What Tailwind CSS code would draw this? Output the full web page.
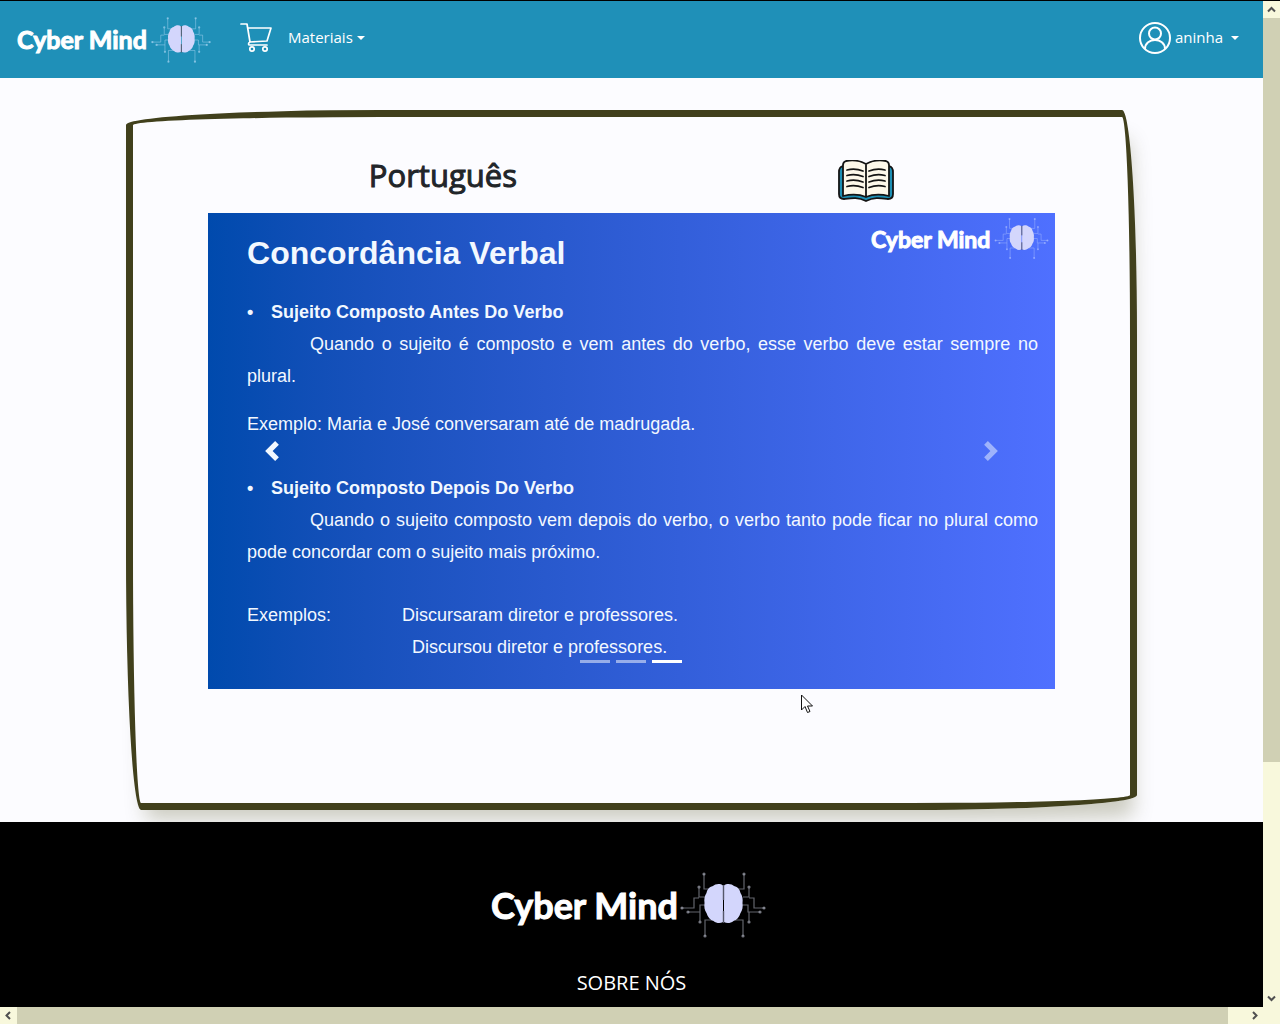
<!DOCTYPE html>
<html lang="pt-BR">
<head>
<meta charset="utf-8">
<meta name="viewport" content="width=device-width, initial-scale=1">
<title>Cyber Mind</title>
<script src="https://cdn.jsdelivr.net/npm/@tailwindcss/browser@4"></script>
</head>
<body class="flex h-screen flex-col overflow-hidden border-t border-black bg-[#fcfcff] font-['Open_Sans',sans-serif] text-base text-[#212529]">

<svg class="hidden" aria-hidden="true">
  <symbol id="brain" viewBox="0 0 86 68">
    <g fill="none" stroke="currentColor" stroke-width="1.2" opacity=".6">
      <path d="M24 3v15h8M64 3v15h-8M19 17v9h6M69 17v9h-6M1 37h13V27h5M85 37H74V27h-5M8 41h12v-7h6M80 41H68v-7h-6M20 50v-9M69 50v-9M25 65V49h8M63 65V49h-8"/>
    </g>
    <g fill="currentColor" opacity=".7">
      <circle cx="24" cy="3" r="1.6"/><circle cx="64" cy="3" r="1.6"/><circle cx="19" cy="16" r="1.6"/><circle cx="69" cy="16" r="1.6"/><circle cx="2" cy="37" r="1.6"/><circle cx="84" cy="37" r="1.6"/><circle cx="8" cy="41" r="1.6"/><circle cx="80" cy="41" r="1.6"/><circle cx="20" cy="51" r="1.6"/><circle cx="69" cy="51" r="1.6"/><circle cx="25" cy="65" r="1.6"/><circle cx="63" cy="65" r="1.6"/>
    </g>
    <path fill="#d3d6fc" d="M43 14.500c-3-2.500-8-1.500-10 .5-4 1-6 4-6.500 7-2 3-2.500 6-2 10-.5 4 0 7 2 10 1 4 4 7 7 8 3 2.500 7 2.500 9.500 1zM44 14.500c3-2.500 8-1.500 10 .5 4 1 6 4 6.500 7 2 3 2.500 6 2 10 .5 4 0 7-2 10-1 4-4 7-7 8-3 2.500-7 2.500-9.500 1z"/>
    <path stroke="#55576a" stroke-width="1.400" d="M43.500 14v15M43.500 40v12"/>
  </symbol>
</svg>

<div class="flex min-h-0 flex-1">
  <div class="min-w-0 flex-1 overflow-hidden">
    <header class="flex h-[77px] items-center bg-[#1f90b8] px-[17px] text-white">
      <a href="#" class="flex items-center gap-[3px] font-['Lato',sans-serif] text-[25px] font-bold">
        <span class="w-[131px] whitespace-nowrap [-webkit-text-stroke:1px_white]">Cyber Mind</span>
        <svg class="h-12 w-[60px] text-[#a5d3f0]"><use href="#brain"/></svg>
      </a>
      <a href="#" aria-label="Carrinho" class="ml-[29px] pb-1">
        <svg class="h-8 w-8" viewBox="0 0 32 32" fill="none" stroke="currentColor" stroke-width="1.700" stroke-linecap="round" stroke-linejoin="round"><path d="M1 2h6l3 18M8 6h23l-4 13-17 1c-2 1-2 3 0 3h17"/><circle cx="12" cy="27" r="2.200"/><circle cx="25" cy="27" r="2.200"/></svg>
      </a>
      <button type="button" class="ml-4 flex items-center gap-1 pb-1 text-[15px]"><span>Materiais</span><svg class="h-1 w-2" viewBox="0 0 8 4"><path fill="currentColor" d="M0 0h8L4 4z"/></svg></button>
      <button type="button" class="mr-[7px] ml-auto flex items-center gap-1 pb-1 text-[15px]">
        <svg class="h-8 w-8" viewBox="0 0 32 32" fill="none" stroke="currentColor" stroke-width="2"><circle cx="16" cy="16" r="15"/><circle cx="16" cy="11.500" r="6"/><path d="M6 27c0-12 20-12 20 0"/></svg>
        <span>aninha</span><svg class="ml-1 h-1 w-2" viewBox="0 0 8 4"><path fill="currentColor" d="M0 0h8L4 4z"/></svg>
      </button>
    </header>

    <main class="pt-8 pb-3">
      <section class="mx-auto w-4/5 rounded-[255px_15px_225px_15px/15px_225px_15px_255px] border-[7px] border-[#41401c] pb-[114px] shadow-[6px_20px_20px_-10px_rgba(60,60,0,0.25)]">
        <div class="grid h-24 grid-cols-2 items-center pr-[52px] pl-[98px] pt-5">
          <h1 class="text-center text-[31px] leading-10 font-medium [-webkit-text-stroke:1px_#212529]">Português</h1>
          <svg class="mx-auto mt-3 h-[42px] w-14" viewBox="0 0 56 42" fill="none" stroke="#141414" stroke-width="1.800" stroke-linecap="round" stroke-linejoin="round">
            <path fill="#1d8fb4" d="M5 6Q1 7 1 12v22q0 5 5 5c8-1 14-2 22 2 8-4 14-3 22-2q5 0 5-5V12q0-5-4-6z"/>
            <path fill="#fdf8ea" d="M28 4C21 0 14 0 8 1Q5 2 5 5v31c8-2 16-2 23 1 7-3 15-3 23-1V5q0-3-3-4C42 0 35 0 28 4zv33"/>
            <path d="M9 10q8-2 16 1M9 15.500q8-2 16 1M9 21q8-2 16 1M9 26.500q8-2 16 1M31 11q8-3 16-1M31 16.500q8-3 16-1M31 22q8-3 16-1M31 27.500q8-3 16-1"/>
          </svg>
        </div>

        <div class="relative mx-auto aspect-video w-[85%] bg-linear-to-r from-[#004aad] to-[#4f70ff] pt-5 pr-[17px] pl-[39px] font-['Liberation_Sans',sans-serif] text-lg leading-8 text-[#f2f8ff]">
          <h2 class="mb-[23px] text-[32px] leading-10 font-bold">Concordância Verbal</h2>
          <div class="absolute top-1 right-[6px] flex items-center gap-[2px] font-['Lato',sans-serif] text-[23px] font-bold text-white">
            <span class="w-[121px] whitespace-nowrap [-webkit-text-stroke:1px_white]">Cyber Mind</span>
            <svg class="h-[43px] w-[55px] text-[#a9bcff]"><use href="#brain"/></svg>
          </div>
          <h3 class="flex font-bold"><span class="w-6">•</span>Sujeito Composto Antes Do Verbo</h3>
          <p class="text-justify indent-[63px]">Quando o sujeito é composto e vem antes do verbo, esse verbo deve estar sempre no plural.</p>
          <p class="mt-4">Exemplo: Maria e José conversaram até de madrugada.</p>
          <h3 class="mt-8 flex font-bold"><span class="w-6">•</span>Sujeito Composto Depois Do Verbo</h3>
          <p class="text-justify indent-[63px]">Quando o sujeito composto vem depois do verbo, o verbo tanto pode ficar no plural como pode concordar com o sujeito mais próximo.</p>
          <div class="mt-[31px] flex">
            <p class="w-[155px]">Exemplos:</p>
            <div><p>Discursaram diretor e professores.</p><p class="pl-[10px]">Discursou diretor e professores.</p></div>
          </div>
          <button type="button" aria-label="Anterior" class="absolute inset-y-0 left-0 flex w-[15%] items-center justify-center"><svg class="h-5 w-5" viewBox="0 0 8 8" fill="currentColor"><path d="M5.250 0l-4 4 4 4 1.500-1.500L4.250 4l2.500-2.500L5.250 0z"/></svg></button>
          <button type="button" aria-label="Próximo" class="absolute inset-y-0 right-0 flex w-[15%] items-center justify-center opacity-50"><svg class="h-5 w-5" viewBox="0 0 8 8" fill="currentColor"><path d="M2.750 0l-1.500 1.500L3.750 4l-2.500 2.500L2.750 8l4-4-4-4z"/></svg></button>
          <div class="absolute inset-x-0 bottom-[26px] flex justify-center gap-[6px]">
            <button type="button" aria-label="Slide 1" class="h-[3px] w-[30px] bg-white/50"></button>
            <button type="button" aria-label="Slide 2" class="h-[3px] w-[30px] bg-white/50"></button>
            <button type="button" aria-label="Slide 3" class="h-[3px] w-[30px] bg-white"></button>
          </div>
        </div>
      </section>
    </main>

    <footer class="relative flex flex-col items-center bg-black pt-[49px] pb-16 text-white">
      <a href="#" class="flex items-center pr-[6px] font-['Lato',sans-serif] text-4xl leading-none font-bold">
        <span class="w-[189px] whitespace-nowrap [-webkit-text-stroke:1px_white]">Cyber Mind</span>
        <svg class="h-[68px] w-[86px] text-[#a5a8b5]"><use href="#brain"/></svg>
      </a>
      <h4 class="mt-7 text-xl leading-8">SOBRE NÓS</h4>
    </footer>
  </div>

  <div class="flex w-[17px] flex-col bg-[#f8f8dc] text-[#505050]">
    <svg class="h-[17px] w-[17px]" viewBox="0 0 17 17" fill="none" stroke="currentColor" stroke-width="2"><path d="M5 10.500l3.500-3.500 3.500 3.500"/></svg>
    <div class="h-[74%] bg-[#d0d0b4]"></div>
    <svg class="mt-auto h-[17px] w-[17px]" viewBox="0 0 17 17" fill="none" stroke="currentColor" stroke-width="2"><path d="M5 6.500L8.500 10 12 6.500"/></svg>
  </div>
</div>

<div class="flex h-[17px] shrink-0 bg-[#f8f8dc] pr-[17px] text-[#505050]">
  <svg class="h-[17px] w-[17px] shrink-0" viewBox="0 0 17 17" fill="none" stroke="currentColor" stroke-width="2"><path d="M10 5L6.500 8.500 10 12"/></svg>
  <div class="mr-[18px] flex-1 bg-[#d0d0b4]"></div>
  <svg class="h-[17px] w-[17px] shrink-0" viewBox="0 0 17 17" fill="none" stroke="currentColor" stroke-width="2"><path d="M7 5l3.500 3.500L7 12"/></svg>
</div>

<svg class="absolute top-[694px] left-[801px] h-5 w-3" viewBox="0 0 12 20"><path fill="#fff" stroke="#111" d="M.5 1v15l3.500-3.500 2.500 6 2.500-1-2.500-5.500h5z"/></svg>
</body>
</html>
